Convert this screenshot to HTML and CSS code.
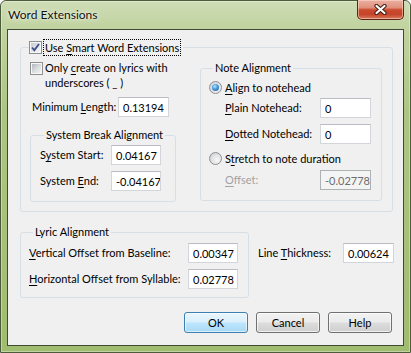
FILE: index.html
```html
<!DOCTYPE html>
<html>
<head>
<meta charset="utf-8">
<link rel="stylesheet" href="styles.css">
</head>
<body>
<div class="window">
  <header class="titlebar">
    <span class="title">Word Extensions</span>
    <span class="close"><svg width="13" height="11" viewBox="0 0 13 11"><path d="M2.5 2L10.5 9M10.5 2L2.5 9" stroke="#3e1c14" stroke-width="4.2" stroke-linecap="round"/><path d="M2.5 2L10.5 9M10.5 2L2.5 9" stroke="#ffffff" stroke-width="2.2" stroke-linecap="round"/></svg></span>
  </header>
  <main class="client">
    <fieldset class="group main-group">
      <legend class="main-legend"><span class="cb checked"><svg width="9" height="9" viewBox="0 0 9 9"><path d="M1 4.5L3.3 7.2L8 1" fill="none" stroke="#3a4f8c" stroke-width="1.8"/></svg></span><span class="focus">Use <u>S</u>mart Word Extensions</span></legend>
      <div class="main-body">
        <div class="left-col">
          <div class="check-row"><span class="cb"></span><span class="check-text">Only <u>c</u>reate on lyrics with<br>underscores ( _ )</span></div>
          <div class="field-row min-row"><label class="lbl w-min">Minimum <u>L</u>ength:</label><input class="tb w51" value="0.13194" readonly></div>
          <fieldset class="group break-group">
            <legend class="sub-legend">System Break Alignment</legend>
            <div class="field-row"><label class="lbl w-sys">S<u>y</u>stem Start:</label><input class="tb w50" value="0.04167" readonly></div>
            <div class="field-row gap6"><label class="lbl w-sys">System <u>E</u>nd:</label><input class="tb w50" value="-0.04167" readonly></div>
          </fieldset>
        </div>
        <fieldset class="group note-group">
          <legend class="sub-legend">Note Alignment</legend>
          <div class="radio-row"><span class="rb checked"></span><span class="radio-text"><u>A</u>lign to notehead</span></div>
          <div class="field-row indent plain-row"><label class="lbl w-note"><u>P</u>lain Notehead:</label><input class="tb w51" value="0" readonly></div>
          <div class="field-row indent gap6"><label class="lbl w-note"><u>D</u>otted Notehead:</label><input class="tb w51" value="0" readonly></div>
          <div class="radio-row stretch-row"><span class="rb"></span><span class="radio-text">S<u>t</u>retch to note duration</span></div>
          <div class="field-row indent offset-row"><label class="lbl w-note disabled"><u>O</u>ffset:</label><input class="tb w51 tb-disabled" value="-0.02778" readonly></div>
        </fieldset>
      </div>
    </fieldset>
    <div class="lyric-row">
      <fieldset class="group lyric-group">
        <legend class="sub-legend">Lyric Alignment</legend>
        <div class="field-row"><label class="lbl w-lyric"><u>V</u>ertical Offset from Baseline:</label><input class="tb w50" value="0.00347" readonly></div>
        <div class="field-row gap6"><label class="lbl w-lyric"><u>H</u>orizontal Offset from Syllable:</label><input class="tb w50" value="0.02778" readonly></div>
      </fieldset>
      <div class="field-row thick-row"><label class="lbl w-thick">Line <u>T</u>hickness:</label><input class="tb w51" value="0.00624" readonly></div>
    </div>
    <div class="buttons">
      <button class="btn default">OK</button>
      <button class="btn">Cancel</button>
      <button class="btn">Help</button>
    </div>
  </main>
</div>
</body>
</html>
```

FILE: styles.css
```css
* { box-sizing: border-box; }
html, body { margin: 0; padding: 0; background: #ffffff; }
body {
  font-family: Lato, "Liberation Sans", sans-serif;
  font-size: 11px;
  color: #000;
}
u { text-decoration: underline; text-underline-offset: 2px; }

.window {
  width: 411px;
  height: 353px;
  display: flex;
  flex-direction: column;
  border: 1px solid #4c5c3a;
  border-radius: 6px 6px 0 0;
  padding: 0 6px 6px 6px;
  background: linear-gradient(180deg, #cfddb6 0px, #c1d3a0 26px, #adc582 110px, #a0bc6f 353px);
  box-shadow: inset 0 0 0 1px rgba(255,255,255,0.35);
  white-space: nowrap;
}

.titlebar {
  height: 28px;
  display: flex;
  justify-content: space-between;
  align-items: flex-start;
  flex: none;
}
.title {
  margin: 6px 0 0 1px;
  line-height: 16px;
  font-size: 12px;
  color: #101010;
  text-shadow: 0 0 6px rgba(255,255,255,0.9), 0 0 2px rgba(255,255,255,0.8);
}
.close {
  width: 47px;
  height: 20px;
  margin-top: -1px;
  border: 1px solid #5e2417;
  border-top: none;
  border-radius: 0 0 5px 5px;
  background: linear-gradient(180deg, #ebb1a2 0%, #e0917c 40%, #cc4a2e 52%, #c4432a 75%, #d97a5c 100%);
  box-shadow: inset 0 0 0 1px rgba(255,220,205,0.55);
  display: flex;
  align-items: center;
  justify-content: center;
}

.client {
  flex: 1;
  border: 1px solid #3e4b33;
  background: #f0f0f0;
  padding: 9px 10px 0 12px;
  min-height: 0;
}

.group {
  margin: 0;
  border: 1px solid #d5dfe5;
  border-radius: 3px;
  min-width: 0;
}
.sub-legend {
  padding: 0 2px;
  margin-left: 4px;
  line-height: 16px;
  height: 16px;
}

.main-group {
  padding: 4px 9px 9px 8px;
}
.main-legend {
  padding: 0 2px 0 0;
  display: flex;
  align-items: center;
  height: 17px;
}
.focus {
  margin-left: 1px;
  border: 1px dotted #000;
  padding: 0 1px 0 1px;
  line-height: 15px;
}

.cb {
  width: 13px;
  height: 13px;
  flex: none;
  border: 1px solid #8e8f8f;
  padding: 1px;
  background: linear-gradient(135deg, #b5b9be 0%, #dcdee0 55%, #f2f2f2 100%) content-box, #f7f7f7;
  display: flex;
  align-items: center;
  justify-content: center;
}
.cb.checked {
  background: linear-gradient(135deg, #c9ccd0 0%, #e6e7e8 60%, #f5f5f5 100%) content-box, #f7f7f7;
}
.cb svg { display: block; }

.main-body {
  display: flex;
  align-items: flex-start;
}
.left-col {
  width: 147px;
  padding-left: 1px;
  flex: none;
}
.check-row {
  display: flex;
  align-items: flex-start;
}
.check-row .cb { margin-top: 2px; }
.check-text {
  margin-left: 2px;
  line-height: 15px;
}

.field-row {
  display: flex;
  align-items: center;
  height: 20px;
}
.gap6 { margin-top: 6px; }
.lbl { line-height: 20px; white-space: nowrap; flex: none; }
.lbl.disabled { color: #a2a2a2; }

.tb {
  height: 20px;
  border: 1px solid #d2d5da;
  border-top-color: #b9bcc2;
  background: #fff;
  font-family: inherit;
  font-size: 11px;
  color: #000;
  padding: 0 0 0 4px;
  margin: 0;
  outline: none;
  flex: none;
}
.tb-disabled {
  background: #f4f4f4;
  border-color: #adb2b5;
  color: #6d6d6d;
}
.w50 { width: 50px; }
.w51 { width: 51px; }

.min-row { margin-top: 7px; padding-left: 2px; }
.w-min { width: 86px; }

.break-group {
  margin-top: 10px;
  width: 146px;
  padding: 2px 0 10px 9px;
}
.w-sys { width: 71px; }

.note-group {
  margin-left: 24px;
  width: 182px;
  flex: none;
  padding: 4px 0 10px 8px;
}
.radio-row {
  display: flex;
  align-items: center;
  height: 15px;
}
.radio-text { margin-left: 3px; line-height: 15px; }
.rb {
  width: 13px;
  height: 13px;
  flex: none;
  border-radius: 50%;
  border: 1px solid #8d8f92;
  background: radial-gradient(circle at 65% 65%, #f7f7f7 0%, #e2e3e5 50%, #c4c7cb 100%);
  display: flex;
  align-items: center;
  justify-content: center;
}
.rb.checked::after {
  content: "";
  width: 7px;
  height: 7px;
  border-radius: 50%;
  background: radial-gradient(circle at 40% 35%, #b9e6ff 0%, #4aa2e0 40%, #1a4f95 100%);
}
.indent { padding-left: 16px; }
.w-note { width: 95px; }
.plain-row { margin-top: 3px; }
.stretch-row { margin-top: 7px; }
.offset-row { margin-top: 4px; }

.lyric-row {
  display: flex;
  align-items: flex-start;
  margin-top: 12px;
}
.lyric-group {
  width: 229px;
  flex: none;
  padding: 3px 0 8px 8px;
}
.w-lyric { width: 159px; }
.thick-row { margin: 19px 0 0 9px; }
.w-thick { width: 85px; }

.buttons {
  display: flex;
  justify-content: flex-end;
  gap: 8px;
  margin-top: 14px;
  padding-right: 1px;
}
.btn {
  width: 64px;
  height: 21px;
  border: 1px solid #707070;
  border-radius: 3px;
  background: linear-gradient(180deg, #f2f2f2 0%, #ebebeb 48%, #dddddd 52%, #cfcfcf 100%);
  box-shadow: inset 0 0 0 1px rgba(255,255,255,0.7);
  font-family: inherit;
  font-size: 11px;
  color: #000;
  padding: 0;
  margin: 0;
}
.btn.default {
  border-color: #3c7fb1;
  background: linear-gradient(180deg, #eaf6fd 0%, #d9f0fc 48%, #bee6fd 52%, #a7d9f5 100%);
  box-shadow: inset 0 0 0 1px rgba(255,255,255,0.6);
}
```
